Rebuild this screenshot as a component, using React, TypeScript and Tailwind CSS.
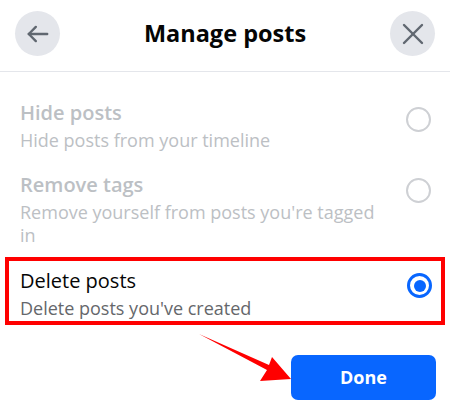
import React from "react";

function Radio({ checked }: { checked?: boolean }) {
  if (checked) {
    return (
      <div className="w-[25px] h-[25px] rounded-full border-[3px] border-[#0866ff] flex items-center justify-center shrink-0">
        <div className="w-[12px] h-[12px] rounded-full bg-[#0866ff]" />
      </div>
    );
  }
  return <div className="w-[25px] h-[25px] rounded-full border-2 border-[#ced0d4] shrink-0" />;
}

export default function App() {
  return (
    <div
      className="relative w-[450px] h-[416px] bg-white overflow-hidden"
      style={{ fontFamily: '"Open Sans", "Noto Sans", sans-serif' }}
    >
      <header className="flex items-center justify-between px-[15px] pt-[11px] pb-[15px] border-b border-[#e4e6eb]">
        <button className="w-[45px] h-[45px] rounded-full bg-[#e4e6eb] flex items-center justify-center">
          <svg width="26" height="26" viewBox="0 0 24 24" fill="none" stroke="#606770" strokeWidth="2.2" strokeLinecap="round" strokeLinejoin="round">
            <path d="M20.5 12H3.5" />
            <path d="M10 5.5l-6.5 6.5 6.5 6.5" />
          </svg>
        </button>
        <h1 className="text-[23.5px] font-bold text-[#050505] leading-none">Manage posts</h1>
        <button className="w-[45px] h-[45px] rounded-full bg-[#e4e6eb] flex items-center justify-center">
          <svg width="24" height="24" viewBox="0 0 24 24" fill="none" stroke="#606770" strokeWidth="2.4" strokeLinecap="round">
            <path d="M3 3l18 18" />
            <path d="M21 3L3 21" />
          </svg>
        </button>
      </header>

      <div className="pt-[28px]">
        <div className="flex items-start justify-between pl-[20px] pr-[19px]">
          <div className="w-[365px]">
            <div className="text-[20px] font-semibold leading-[26px] text-[#bcc0c4]">Hide posts</div>
            <div className="mt-[3px] text-[18px] leading-[23px] text-[#bcc0c4]">Hide posts from your timeline</div>
          </div>
          <div className="mt-[7px]"><Radio /></div>
        </div>

        <div className="flex items-start justify-between pl-[20px] pr-[19px] mt-[20px]">
          <div className="w-[365px]">
            <div className="text-[20px] font-semibold leading-[26px] text-[#bcc0c4]">Remove tags</div>
            <div className="mt-[3px] text-[18px] leading-[23px] text-[#bcc0c4]">Remove yourself from posts you're tagged in</div>
          </div>
          <div className="mt-[6px]"><Radio /></div>
        </div>

        <div className="mx-[5px] mt-[10px] border-4 border-[#ff0000] pl-[11px] pr-[9px] pt-[7px] pb-[1px] flex items-start justify-between">
          <div>
            <div className="text-[20px] leading-[26px] text-[#050505]">Delete posts</div>
            <div className="mt-[3px] text-[18px] leading-[23px] text-[#65676b]">Delete posts you've created</div>
          </div>
          <div className="mt-[5px]"><Radio checked /></div>
        </div>
      </div>

      <div className="flex justify-end pr-[14px] mt-[30px]">
        <button className="w-[145px] h-[45px] rounded-[7px] bg-[#0866ff] text-white text-[18px] font-bold">
          Done
        </button>
      </div>

      <svg className="absolute left-0 top-0 pointer-events-none" width="450" height="416" viewBox="0 0 450 416">
        <polygon points="199,334 269,365 272,357 291,379 260,381 267,370" fill="#ff0000" />
      </svg>
    </div>
  );
}
